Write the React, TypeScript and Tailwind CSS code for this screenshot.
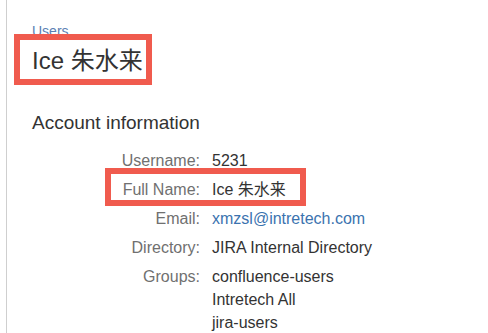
import React from "react";

const font = { fontFamily: '"Liberation Sans", Arial, "Noto Sans CJK SC", sans-serif' };

const rows: { label: string; values: string[]; link?: boolean }[] = [
  { label: "Username:", values: ["5231"] },
  { label: "Full Name:", values: ["Ice 朱水来"] },
  { label: "Email:", values: ["xmzsl@intretech.com"], link: true },
  { label: "Directory:", values: ["JIRA Internal Directory"] },
  { label: "Groups:", values: ["confluence-users", "Intretech All", "jira-users"] },
];

export default function App() {
  return (
    <div className="relative h-[333px] w-[488px] overflow-hidden bg-white" style={font}>
      <div className="ml-[6px] h-full border-l border-[#cfcfcf] pl-[25px]">
        {/* breadcrumb */}
        <div className="pt-[23px] text-[14px] leading-[16px] text-[#5b7fb3]">Users</div>

        {/* title */}
        <h1 className="mt-[7px] text-[24px] leading-[30px] text-[#333]">Ice 朱水来</h1>

        <h2 className="mt-[35px] text-[19px] leading-[24px] text-[#333]">Account information</h2>

        {/* details */}
        <div className="mt-[14px] flex flex-col gap-[6px] text-[16px] leading-[23px]">
          {rows.map(r => (
            <div key={r.label} className="flex">
              <div className="w-[168px] shrink-0 text-right text-[#707070]">{r.label}</div>
              <div className="pl-[12px]">
                {r.values.map(v => (
                  <div key={v} className={r.link ? "text-[#3b73af]" : "text-[#333]"}>{v}</div>
                ))}
              </div>
            </div>
          ))}
        </div>
      </div>

      {/* annotation boxes */}
      <div className="absolute left-[14px] top-[34px] h-[51px] w-[138px] border-[6px] border-[#f05b4e]" />
      <div className="absolute left-[105px] top-[168px] h-[38px] w-[201px] border-[6px] border-[#f05b4e]" />
    </div>
  );
}
